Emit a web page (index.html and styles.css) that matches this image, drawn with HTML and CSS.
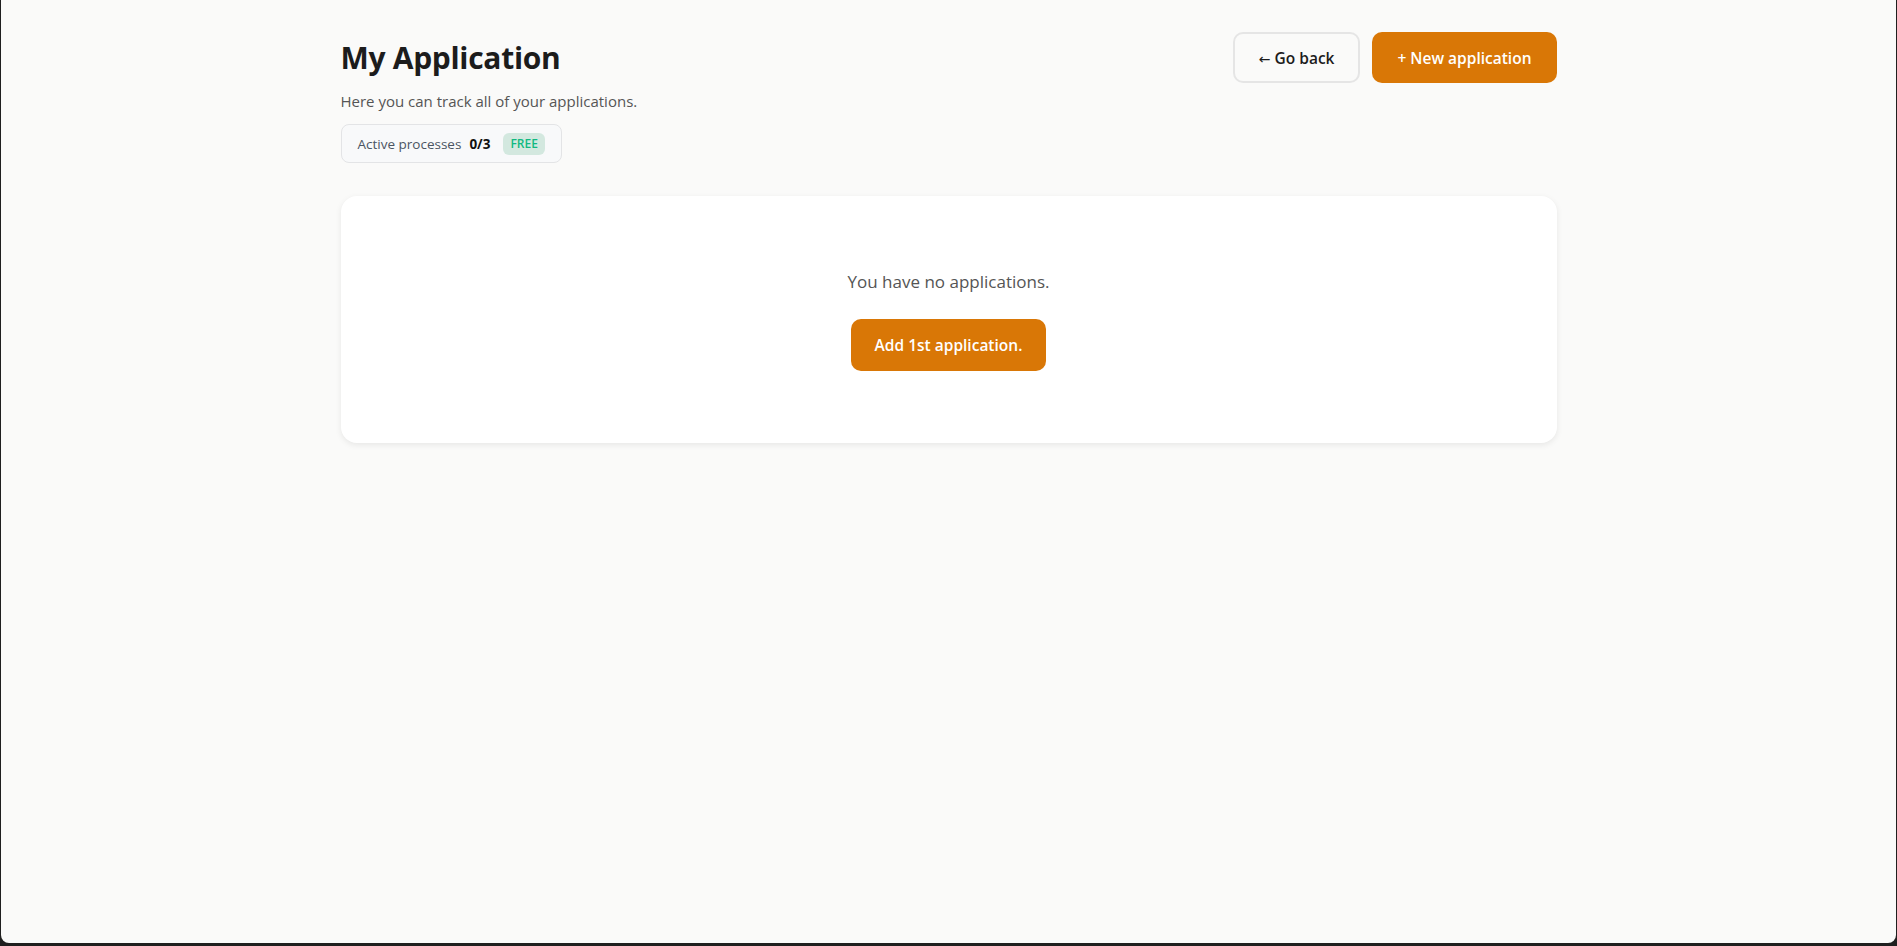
FILE: index.html
```html
<!DOCTYPE html>
<html lang="en">
<head>
    <meta charset="UTF-8">
    <meta name="viewport" content="width=device-width, initial-scale=1.0">
    <title>My Application</title>
    <link rel="stylesheet" href="styles.css">
</head>
<body>
    <div class="window">
        <main class="page">
            <header class="page-header">
                <div class="heading">
                    <h1>My Application</h1>
                    <p class="subtitle">Here you can track all of your applications.</p>
                    <div class="usage">
                        <span class="usage-label">Active processes</span>
                        <span class="usage-count">0/3</span>
                        <span class="plan">FREE</span>
                    </div>
                </div>
                <div class="actions">
                    <button class="btn btn-light"><span class="arrow">&larr;</span> Go back</button>
                    <button class="btn btn-primary">+ New application</button>
                </div>
            </header>

            <section class="card empty">
                <p class="empty-text">You have no applications.</p>
                <button class="btn btn-primary btn-add">Add 1st application.</button>
            </section>
        </main>
    </div>
</body>
</html>
```

FILE: styles.css
```css
html, body { margin: 0; height: 100%; }
body { background: #1f1f1f; padding: 0 1px 3px 1px; box-sizing: border-box; font-family: "Open Sans", "Noto Sans", Arial, sans-serif; color: #1c1c1c; }
.window { height: 100%; background: #fafaf9; border-radius: 0 0 8px 8px; overflow: hidden; }
.page { max-width: 1216px; margin: 0 auto; padding-top: 32px; }

.page-header { display: flex; justify-content: space-between; align-items: flex-start; }
h1 { margin: 0; font-size: 30px; line-height: 52px; font-weight: 700; letter-spacing: -0.3px; }
.subtitle { margin: 6px 0 0; font-size: 15px; line-height: 22px; color: #555; }
.usage { display: inline-flex; align-items: center; margin-top: 12px; height: 39px; box-sizing: border-box; padding: 0 16px; background: #f8f9fa; border: 1px solid #e3e4e6; border-radius: 8px; font-size: 13.5px; }
.usage-label { color: #4b5563; }
.usage-count { margin-left: 8px; font-weight: 700; color: #111; }
.plan { margin-left: 13px; padding: 0 7px; height: 22px; line-height: 22px; border-radius: 6px; background: #d3e8df; color: #10b981; font-size: 12px; font-weight: 600; }

.actions { display: flex; gap: 12px; }
.btn { font-family: inherit; font-size: 15.5px; font-weight: 600; height: 51px; padding: 0 25px; border-radius: 10px; cursor: pointer; }
.btn-light { padding: 0 24px; background: #fafaf9; color: #1c1c1c; border: 2px solid #e5e5e5; }
.btn-primary { background: #d97706; color: #fff; border: none; }
.arrow { font-family: "DejaVu Sans", sans-serif; font-weight: 400; font-size: 14px; }

.card { margin-top: 33px; background: #fff; border-radius: 16px; box-shadow: 0 2px 6px rgba(0, 0, 0, 0.08); }
.empty { display: flex; flex-direction: column; align-items: center; padding: 72px 0; }
.empty-text { margin: 0; font-size: 17px; line-height: 28px; color: #555; }
.btn-add { margin-top: 23px; height: 52px; padding: 0 24px; }
```
